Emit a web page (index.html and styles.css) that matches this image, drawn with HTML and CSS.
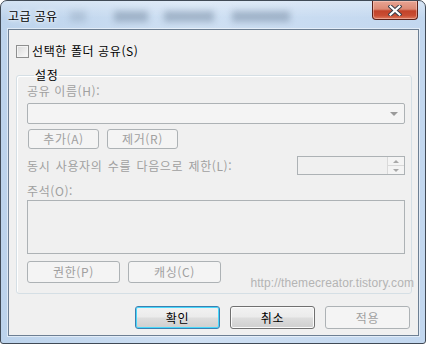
FILE: index.html
```html
<!DOCTYPE html>
<html lang="ko">
<head>
    <meta charset="UTF-8">
    <meta name="viewport" content="width=device-width, initial-scale=1.0">
    <title>고급 공유</title>
    <link rel="stylesheet" href="styles.css">
</head>
<body>
    <div class="window">
        <div class="titlebar">
            <span class="title">고급 공유</span>
            <div class="backdrop">
                <span class="blob b1"></span>
                <span class="blob b2"></span>
                <span class="blob b3"></span>
                <span class="blob b4"></span>
            </div>
            <button class="close" type="button">
                <svg width="14" height="11" viewBox="0 0 14 11">
                    <path d="M2.5 1.5 L11.5 9.5 M11.5 1.5 L2.5 9.5" stroke="#3b3f4a" stroke-width="4.2" stroke-linecap="square" fill="none"/>
                    <path d="M2.5 1.5 L11.5 9.5 M11.5 1.5 L2.5 9.5" stroke="#ffffff" stroke-width="2.2" stroke-linecap="square" fill="none"/>
                </svg>
            </button>
        </div>
        <div class="frame">
            <div class="client">
                <div class="check-row">
                    <span class="checkbox"></span>
                    <span>선택한 폴더 공유(S)</span>
                </div>

                <fieldset class="group">
                    <legend>설정</legend>
                    <div class="label first">공유 이름(H):</div>
                    <div class="combo"><span class="combo-arrow"></span></div>
                    <div class="btn-row">
                        <span class="btn small">추가(A)</span>
                        <span class="btn small">제거(R)</span>
                    </div>
                    <div class="limit-row">
                        <span class="label">동시 사용자의 수를 다음으로 제한(L):</span>
                        <div class="spin">
                            <div class="spin-btns">
                                <span class="spin-up"></span>
                                <span class="spin-down"></span>
                            </div>
                        </div>
                    </div>
                    <div class="label memo-label">주석(O):</div>
                    <div class="memo"></div>
                    <div class="btn-row wide">
                        <span class="btn">권한(P)</span>
                        <span class="btn">캐싱(C)</span>
                    </div>
                </fieldset>

                <div class="watermark">http://themecreator.tistory.com</div>

                <div class="actions">
                    <button class="dlg-btn default" type="button">확인</button>
                    <button class="dlg-btn" type="button">취소</button>
                    <button class="dlg-btn disabled" type="button">적용</button>
                </div>
            </div>
        </div>
    </div>
</body>
</html>
```

FILE: styles.css
```css
body {
    margin: 0;
    padding: 0;
    background: #ffffff;
    font-family: "Noto Sans CJK KR", "Noto Sans", sans-serif;
    font-size: 12px;
    line-height: 14px;
    letter-spacing: 0.6px;
    color: #000;
}
.window {
    width: 426px;
    height: 344px;
    box-sizing: border-box;
    border: 1px solid #404a56;
    border-radius: 7px 7px 3px 3px;
    background: linear-gradient(90deg, #bcd3ec 0%, #cfe0f3 45%, #c2d7ef 100%);
    display: flex;
    flex-direction: column;
    overflow: hidden;
}
.titlebar {
    position: relative;
    height: 28px;
    flex-shrink: 0;
    display: flex;
    align-items: flex-start;
    padding: 0 7px;
    background: linear-gradient(180deg, rgba(255,255,255,0.35) 0%, rgba(255,255,255,0) 60%);
}
.title {
    margin-top: 8px;
    letter-spacing: 0.4px;
    text-shadow: 0 0 6px #ffffff, 0 0 3px #ffffff;
    position: relative;
    z-index: 1;
}
.backdrop {
    flex: 1;
    display: flex;
    height: 28px;
    position: relative;
}
.blob {
    position: absolute;
    top: 10px;
    height: 11px;
    background: #7d91a8;
    filter: blur(3px);
    opacity: 0.55;
}
.b1 { left: 12px; width: 16px; opacity: 0.3; }
.b2 { left: 56px; width: 34px; }
.b3 { left: 106px; width: 50px; }
.b4 { left: 174px; width: 58px; }
.close {
    width: 46px;
    height: 19px;
    padding: 0;
    margin: 0;
    border: 1px solid #5b2119;
    border-top: none;
    border-radius: 0 0 4px 4px;
    background: linear-gradient(180deg, #e8a493 0%, #dc8a75 45%, #c2432a 55%, #c94d33 80%, #de7a5e 100%);
    box-shadow: inset 0 0 0 1px rgba(255, 220, 210, 0.45);
    display: flex;
    align-items: center;
    justify-content: center;
}
.frame {
    flex: 1;
    display: flex;
    padding: 0 6px 7px 7px;
}
.client {
    position: relative;
    flex: 1;
    border: 1px solid #6d7f93;
    background: #f0f0f0;
    padding: 14px 6px 0 7px;
    display: flex;
    flex-direction: column;
    box-shadow: 0 0 0 1px rgba(255, 255, 255, 0.5);
}
.check-row {
    display: flex;
    align-items: center;
    height: 14px;
    gap: 3px;
}
.checkbox {
    width: 11px;
    height: 11px;
    border: 1px solid #8e8f8f;
    background: linear-gradient(135deg, #d9d9d9 0%, #eeeeee 60%, #fbfbfb 100%);
    box-shadow: inset 0 0 0 1px #f4f4f4;
}
.group {
    margin: 10px 0 0 0;
    padding: 0 6px 10px 10px;
    border: 1px solid #d5dfe5;
    border-radius: 3px;
    box-shadow: inset 1px 1px 0 #ffffff;
    min-inline-size: 0;
}
.group legend {
    padding: 0 1px;
    margin-left: 7px;
    line-height: 14px;
}
.label {
    color: #a0a0a0;
    line-height: 14px;
}
.label.first {
    margin-top: 2px;
}
.combo {
    margin-top: 5px;
    height: 19px;
    border: 1px solid #adb2b5;
    border-radius: 2px;
    background: #f4f4f4;
    position: relative;
}
.combo-arrow {
    position: absolute;
    right: 6px;
    top: 8px;
    width: 0;
    height: 0;
    border-left: 4px solid transparent;
    border-right: 4px solid transparent;
    border-top: 4px solid #9a9a9a;
}
.btn-row {
    display: flex;
    gap: 8px;
    margin-top: 5px;
    padding-left: 1px;
}
.btn {
    width: 91px;
    height: 20px;
    box-sizing: border-box;
    border: 1px solid #adb2b5;
    border-radius: 3px;
    background: #f4f4f4;
    color: #a0a0a0;
    display: flex;
    align-items: center;
    justify-content: center;
}
.btn.small {
    width: 71px;
}
.btn-row.wide {
    margin-top: 7px;
    padding-left: 0;
}
.btn-row.wide .btn {
    width: 93px;
    height: 22px;
}
.limit-row {
    display: flex;
    align-items: center;
    justify-content: space-between;
    margin-top: 7px;
    height: 19px;
}
.limit-row .label {
    word-spacing: 1.5px;
}
.spin {
    width: 108px;
    height: 19px;
    box-sizing: border-box;
    border: 1px solid #adb2b5;
    background: #f0f0f0;
    display: flex;
    justify-content: flex-end;
}
.spin-btns {
    width: 16px;
    display: flex;
    flex-direction: column;
    border-left: 1px solid #d9d9d9;
}
.spin-up, .spin-down {
    flex: 1;
    position: relative;
    background: #f4f4f4;
}
.spin-up {
    border-bottom: 1px solid #d9d9d9;
}
.spin-up::after, .spin-down::after {
    content: "";
    position: absolute;
    left: 5px;
    width: 0;
    height: 0;
    border-left: 3px solid transparent;
    border-right: 3px solid transparent;
}
.spin-up::after {
    top: 3px;
    border-bottom: 3px solid #a8a8a8;
}
.spin-down::after {
    top: 3px;
    border-top: 3px solid #a8a8a8;
}
.memo-label {
    margin-top: 9px;
}
.memo {
    margin-top: 2px;
    height: 52px;
    border: 1px solid #adb2b5;
    background: #f0f0f0;
}
.watermark {
    position: absolute;
    right: 4px;
    top: 246px;
    font-family: "Liberation Sans", Arial, sans-serif;
    font-size: 12px;
    color: #b4b4b4;
    letter-spacing: 0.1px;
}
.actions {
    display: flex;
    justify-content: flex-end;
    gap: 10px;
    margin-top: 12px;
    padding-right: 2px;
}
.dlg-btn {
    width: 85px;
    height: 23px;
    margin: 0;
    padding: 0;
    box-sizing: border-box;
    border: 1px solid #707070;
    border-radius: 3px;
    background: linear-gradient(180deg, #f2f2f2 0%, #ebebeb 48%, #dddddd 52%, #cfcfcf 100%);
    box-shadow: inset 0 0 0 1px #fbfbfb;
    font-family: "Noto Sans CJK KR", "Noto Sans", sans-serif;
    font-size: 12px;
    letter-spacing: 0.6px;
    color: #000;
}
.dlg-btn.default {
    border-color: #3c7fb1;
    box-shadow: inset 0 0 0 1px #48d8fb;
}
.dlg-btn.disabled {
    border-color: #adb2b5;
    background: #f4f4f4;
    box-shadow: none;
    color: #a0a0a0;
}
```
